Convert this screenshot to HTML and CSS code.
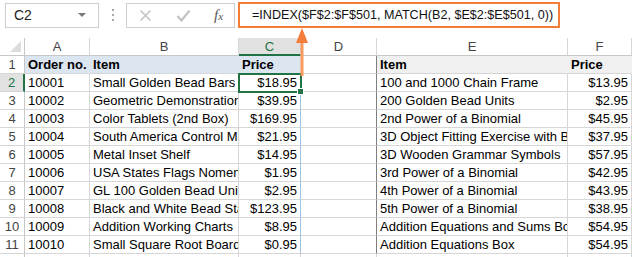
FILE: index.html
```html
<!DOCTYPE html>
<html lang="en">
<head>
	<meta charset="UTF-8">
	<title>INDEX MATCH</title>
	<link rel="stylesheet" href="styles.css">
</head>
<body>
	<div class="app">
		<div class="formula-bar">
			<div class="name-box"><span>C2</span><i class="caret"></i></div>
			<div class="grip"><i></i><i></i><i></i></div>
			<div class="fn-box">
				<svg class="btn" width="13" height="13" viewBox="0 0 13 13"><path d="M1.5 1.5l10 10M11.5 1.5l-10 10" stroke="#c3c3c3" stroke-width="1.6" fill="none"/></svg>
				<svg class="btn" width="15" height="13" viewBox="0 0 15 13"><path d="M1.5 7l4 4.5 8-10" stroke="#c3c3c3" stroke-width="2.2" fill="none"/></svg>
				<span class="fx">f<sub>x</sub></span>
			</div>
			<div class="formula">=INDEX($F$2:$F$501, MATCH(B2, $E$2:$E$501, 0))</div>
		</div>

		<div class="sheet">
			<!-- column headers -->
			<div class="corner"></div>
			<div class="col">A</div><div class="col">B</div><div class="col sel-col">C</div><div class="col">D</div><div class="col">E</div><div class="col">F</div>

			<div class="row">1</div>
			<div class="cell hdr">Order no.</div><div class="cell hdr">Item</div><div class="cell hdr">Price</div><div class="cell d"></div><div class="cell hdr2">Item</div><div class="cell hdr2">Price</div>

			<div class="row sel-row">2</div>
			<div class="cell">10001</div><div class="cell">Small Golden Bead Bars</div><div class="cell num c active">$18.95</div><div class="cell d"></div><div class="cell">100 and 1000 Chain Frame</div><div class="cell num">$13.95</div>

			<div class="row">3</div>
			<div class="cell">10002</div><div class="cell">Geometric Demonstration Material</div><div class="cell num c">$39.95</div><div class="cell d"></div><div class="cell">200 Golden Bead Units</div><div class="cell num">$2.95</div>

			<div class="row">4</div>
			<div class="cell">10003</div><div class="cell">Color Tablets (2nd Box)</div><div class="cell num c">$169.95</div><div class="cell d"></div><div class="cell">2nd Power of a Binomial</div><div class="cell num">$45.95</div>

			<div class="row">5</div>
			<div class="cell">10004</div><div class="cell">South America Control Map</div><div class="cell num c">$21.95</div><div class="cell d"></div><div class="cell">3D Object Fitting Exercise with Box</div><div class="cell num">$37.95</div>

			<div class="row">6</div>
			<div class="cell">10005</div><div class="cell">Metal Inset Shelf</div><div class="cell num c">$14.95</div><div class="cell d"></div><div class="cell">3D Wooden Grammar Symbols</div><div class="cell num">$57.95</div>

			<div class="row">7</div>
			<div class="cell">10006</div><div class="cell">USA States Flags Nomenclature</div><div class="cell num c">$1.95</div><div class="cell d"></div><div class="cell">3rd Power of a Binomial</div><div class="cell num">$42.95</div>

			<div class="row">8</div>
			<div class="cell">10007</div><div class="cell">GL 100 Golden Bead Units</div><div class="cell num c">$2.95</div><div class="cell d"></div><div class="cell">4th Power of a Binomial</div><div class="cell num">$43.95</div>

			<div class="row">9</div>
			<div class="cell">10008</div><div class="cell">Black and White Bead Stair</div><div class="cell num c">$123.95</div><div class="cell d"></div><div class="cell">5th Power of a Binomial</div><div class="cell num">$38.95</div>

			<div class="row">10</div>
			<div class="cell">10009</div><div class="cell">Addition Working Charts</div><div class="cell num c">$8.95</div><div class="cell d"></div><div class="cell">Addition Equations and Sums Box</div><div class="cell num">$54.95</div>

			<div class="row">11</div>
			<div class="cell">10010</div><div class="cell">Small Square Root Board</div><div class="cell num c">$0.95</div><div class="cell d"></div><div class="cell">Addition Equations Box</div><div class="cell num">$54.95</div>

			<div class="row">12</div>
			<div class="cell"></div><div class="cell"></div><div class="cell"></div><div class="cell"></div><div class="cell"></div><div class="cell"></div>
		</div>

		<!-- callout arrow from C2 up to the formula -->
		<svg class="arrow" width="14" height="48" viewBox="0 0 14 48"><rect x="5.5" y="13" width="3" height="35" fill="#f79a5e"/><path d="M7 0L13 15H1Z" fill="#f47d3a"/></svg>
	</div>
</body>
</html>
```

FILE: styles.css
```css
body{margin:0;background:#fff;font:13px "Liberation Sans",Arial,sans-serif;color:#000;}
.app{position:relative;width:632px;height:257px;overflow:hidden;}

/* formula bar */
.formula-bar{display:flex;align-items:center;height:26px;padding:2px 0 10px 5px;}
.name-box{display:flex;align-items:center;justify-content:space-between;box-sizing:border-box;width:94px;height:25px;padding:0 12px 0 8px;border:1px solid #cfcfcf;font-size:14px;color:#222;}
.caret{width:0;height:0;border-left:4px solid transparent;border-right:4px solid transparent;border-top:4px solid #777;}
.grip{display:flex;flex-direction:column;gap:3px;width:27px;align-items:center;}
.grip i{width:2px;height:2px;background:#a8a8a8;}
.fn-box{display:flex;align-items:center;box-sizing:border-box;width:109px;height:25px;padding:0 0 0 12px;border:1px solid #cfcfcf;gap:0;}
.fn-box .btn:first-child{margin-right:24px;}
.fn-box .btn + .btn{margin-right:23px;}
.fx{font:italic 15px "Liberation Serif",serif;color:#555;}
.fx sub{font-size:11px;vertical-align:0;}
.formula{box-sizing:border-box;width:322px;height:26px;margin-left:3px;padding:0 0 0 12px;border:2px solid #f47d3a;font-size:12.6px;line-height:22px;color:#111;white-space:nowrap;}

/* grid */
.sheet{display:grid;grid-template-columns:25px 65px 149px 62px 76px 191px 64px;grid-auto-rows:18px;}
.sheet > div{box-sizing:border-box;border-right:1px solid #d6d6d6;border-bottom:1px solid #d6d6d6;white-space:nowrap;overflow:hidden;line-height:18px;}
.corner{position:relative;border-right-color:#c8c8c8 !important;border-bottom-color:#c8c8c8 !important;}
.corner::after{content:"";position:absolute;right:3px;bottom:3px;border-left:11px solid transparent;border-bottom:11px solid #dcdcdc;}
.col{text-align:center;color:#444;border-bottom-color:#c8c8c8 !important;}
.row{text-align:center;color:#444;border-right-color:#c8c8c8 !important;}
.sel-col{background:#e1e1e1;color:#217346;border-bottom:2px solid #217346 !important;}
.sel-row{background:#e1e1e1;color:#217346;border-right:2px solid #217346 !important;}
.cell{padding:0 3px;}
.num{text-align:right;}
.hdr{background:#dce6f1;font-weight:bold;border-right-color:#dce6f1 !important;}
.hdr2{background:#f0f0f0;font-weight:bold;border-right-color:#f0f0f0 !important;}
.c{border-right-color:#9dc3e6 !important;}
.d{border-right-color:#7f7f7f !important;}
.active{position:relative;overflow:visible !important;outline:2px solid #217346;outline-offset:-1px;}
.active::after{content:"";position:absolute;right:-4px;bottom:-4px;width:5px;height:5px;background:#217346;border:1px solid #fff;}

.arrow{position:absolute;left:295px;top:28px;}
```
